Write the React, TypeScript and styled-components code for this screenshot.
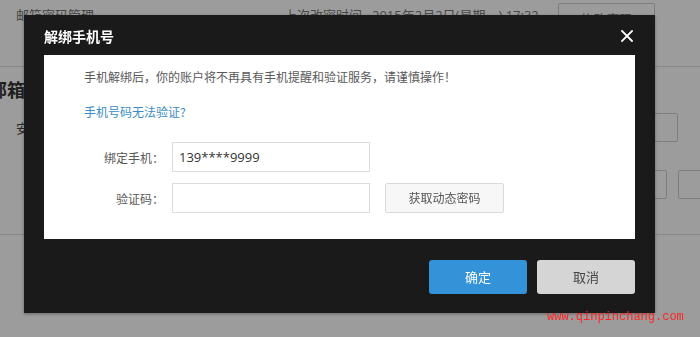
import styled, { createGlobalStyle } from "styled-components";

const GlobalStyle = createGlobalStyle`
    html, body {
        margin: 0;
        padding: 0;
        width: 700px;
        height: 337px;
        overflow: hidden;
        background: #ffffff;
        font-family: "Noto Sans CJK SC", "Noto Sans", sans-serif;
    }
    * {
        box-sizing: border-box;
    }
`;

const App = () => {
    return (
        <>
            <GlobalStyle />
            <Page>
                <TopBar>
                    <TopTitle>邮箱密码管理</TopTitle>
                    <TopMeta>上次改密时间</TopMeta>
                    <TopDate>2015年2月2日(星期一) 17:32</TopDate>
                    <GhostButton>修改密码</GhostButton>
                </TopBar>
                <Section>
                    <SectionTitle>邮箱安全设置</SectionTitle>
                    <SectionRow>
                        <RowLabel>安全问题</RowLabel>
                        <RowBoxes>
                            <GhostBox $width={24} />
                        </RowBoxes>
                    </SectionRow>
                    <SectionRow $top={28}>
                        <RowLabel />
                        <RowBoxes $right={-30}>
                            <GhostBox $width={30} />
                            <GhostBox $width={52} />
                        </RowBoxes>
                    </SectionRow>
                </Section>
            </Page>

            <Mask />

            <Dialog>
                <DialogHeader>
                    <DialogTitle>解绑手机号</DialogTitle>
                    <CloseButton aria-label="关闭">
                        <svg width="12" height="12" viewBox="0 0 12 12">
                            <path d="M1 1 L11 11 M11 1 L1 11" stroke="#ffffff" strokeWidth="1.8" strokeLinecap="square" />
                        </svg>
                    </CloseButton>
                </DialogHeader>
                <DialogBody>
                    <Notice>手机解绑后，你的账户将不再具有手机提醒和验证服务，请谨慎操作！</Notice>
                    <HelpLink>手机号码无法验证?</HelpLink>
                    <FormRow>
                        <FieldLabel>绑定手机：</FieldLabel>
                        <TextField readOnly value="139****9999" />
                    </FormRow>
                    <FormRow $gap={11}>
                        <FieldLabel>验证码：</FieldLabel>
                        <TextField />
                        <CodeButton>获取动态密码</CodeButton>
                    </FormRow>
                </DialogBody>
                <DialogFooter>
                    <FooterButton $primary>确定</FooterButton>
                    <FooterButton>取消</FooterButton>
                </DialogFooter>
            </Dialog>

            <Watermark>www.qinpinchang.com</Watermark>
        </>
    );
};

export default App;

const Page = styled.div`
    width: 700px;
    height: 337px;
    background: #ffffff;
    color: #777777;
    font-size: 13px;
`;

const TopBar = styled.div`
    display: flex;
    align-items: flex-start;
    height: 67px;
    padding: 3px 0 0 16px;
    border-bottom: 1px solid #dedede;
`;

const TopTitle = styled.div`
    width: 268px;
    line-height: 22px;
    margin-top: 1px;
    color: #6e6e6e;
`;

const TopMeta = styled.div`
    width: 88px;
    line-height: 22px;
    margin-top: 1px;
`;

const TopDate = styled.div`
    width: 186px;
    line-height: 22px;
    margin-top: 1px;
    font-family: "Open Sans", "Noto Sans CJK SC", sans-serif;
`;

const GhostButton = styled.div`
    width: 97px;
    height: 32px;
    border: 1px solid #cccccc;
    border-radius: 2px;
    text-align: center;
    line-height: 30px;
`;

const Section = styled.div`
    height: 168px;
    padding-top: 10px;
    border-bottom: 1px solid #dedede;
`;

const SectionTitle = styled.div`
    margin-left: -11px;
    font-size: 18px;
    font-weight: bold;
    line-height: 24px;
    color: #333333;
`;

const SectionRow = styled.div<{ $top?: number }>`
    display: flex;
    align-items: center;
    justify-content: space-between;
    margin-top: ${(p) => p.$top ?? 12}px;
    height: 29px;
`;

const RowLabel = styled.div`
    padding-left: 16px;
    color: #444444;
`;

const RowBoxes = styled.div<{ $right?: number }>`
    display: flex;
    gap: 11px;
    margin-right: ${(p) => p.$right ?? 22}px;
`;

const GhostBox = styled.div<{ $width: number }>`
    width: ${(p) => p.$width}px;
    height: 29px;
    border: 1px solid #cfcfcf;
    border-radius: 2px;
`;

const Mask = styled.div`
    position: fixed;
    inset: 0;
    background: rgba(0, 0, 0, 0.39);
`;

const Dialog = styled.div`
    position: fixed;
    left: 24px;
    top: 15px;
    width: 631px;
    background: #1a1a1a;
    padding: 0 20px 19px;
    box-shadow: 0 1px 3px rgba(0, 0, 0, 0.35);
    display: flex;
    flex-direction: column;
`;

const DialogHeader = styled.div`
    display: flex;
    align-items: center;
    justify-content: space-between;
    height: 40px;
`;

const DialogTitle = styled.div`
    color: #ffffff;
    font-size: 14px;
    font-weight: bold;
    line-height: 20px;
    margin-top: 1px;
`;

const CloseButton = styled.div`
    display: flex;
    width: 12px;
    height: 12px;
    margin: 1px 2px 0 0;
`;

const DialogBody = styled.div`
    background: #ffffff;
    padding: 12px 40px 26px;
    display: flex;
    flex-direction: column;
`;

const Notice = styled.div`
    font-size: 12px;
    line-height: 20px;
    color: #595959;
`;

const HelpLink = styled.a`
    font-size: 12px;
    line-height: 20px;
    margin-top: 15px;
    color: #3a8cc4;
    cursor: pointer;
`;

const FormRow = styled.div<{ $gap?: number }>`
    display: flex;
    align-items: center;
    margin-top: ${(p) => p.$gap ?? 20}px;
`;

const FieldLabel = styled.div`
    width: 80px;
    margin-right: 8px;
    text-align: right;
    font-size: 12px;
    color: #595959;
    white-space: nowrap;
`;

const TextField = styled.input`
    width: 198px;
    height: 30px;
    padding: 0 6px;
    border: 1px solid #dcdcdc;
    outline: none;
    font-family: "Open Sans", "Noto Sans", sans-serif;
    font-size: 13px;
    color: #333333;
`;

const CodeButton = styled.div`
    width: 119px;
    height: 30px;
    margin-left: 15px;
    border: 1px solid #dadada;
    border-radius: 2px;
    background: #f7f7f7;
    text-align: center;
    line-height: 28px;
    font-size: 12px;
    color: #555555;
`;

const DialogFooter = styled.div`
    display: flex;
    justify-content: flex-end;
    gap: 10px;
    padding-top: 21px;
`;

const FooterButton = styled.div<{ $primary?: boolean }>`
    width: 98px;
    height: 34px;
    border-radius: 3px;
    text-align: center;
    line-height: 34px;
    font-size: 13px;
    background: ${(p) => (p.$primary ? "#3392d8" : "#d5d5d5")};
    color: ${(p) => (p.$primary ? "#ffffff" : "#444444")};
`;

const Watermark = styled.div`
    position: fixed;
    left: 547px;
    top: 310px;
    font-family: "Liberation Mono", monospace;
    font-size: 12px;
    line-height: 14px;
    color: #ff2424;
`;
